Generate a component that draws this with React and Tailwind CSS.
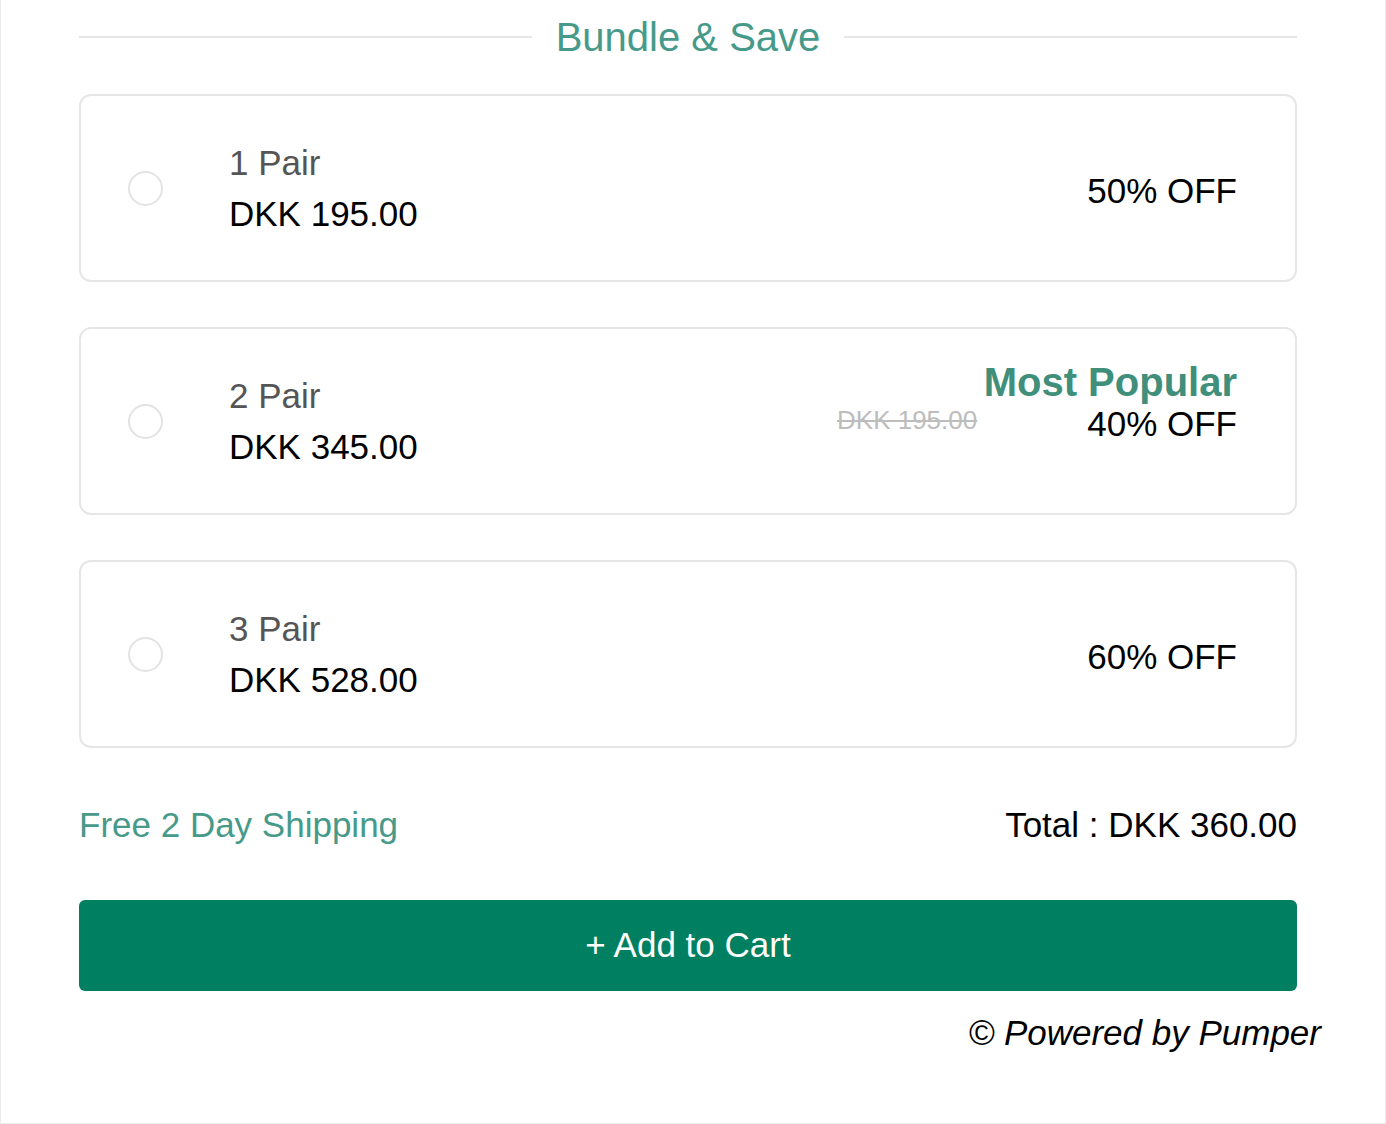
const bundles = [
  { id: 1, label: '1 Pair', price: 'DKK 195.00', off: '50% OFF' },
  { id: 2, label: '2 Pair', price: 'DKK 345.00', off: '40% OFF', compare: 'DKK 195.00', popular: true },
  { id: 3, label: '3 Pair', price: 'DKK 528.00', off: '60% OFF' },
];

function BundleCard({ b }) {
  return (
    <div className="h-[188px] flex items-center border-2 border-[#e6e6e6] rounded-[12px] pl-[47px] pr-[58px]">
      <span className="w-[35px] h-[35px] rounded-full border-2 border-[#e3e3e3] shrink-0" />
      <div className="ml-[66px] -mt-[1px] flex flex-col">
        <span className="text-[35px] leading-[51px] text-[#555555]">{b.label}</span>
        <span className="text-[35px] leading-[51px] text-black">{b.price}</span>
      </div>
      <div className="ml-auto flex items-center">
        {b.compare && (
          <span className="text-[26px] leading-none text-[#bdbdbd] line-through mr-[110px] -mt-[2px]">{b.compare}</span>
        )}
        <div className="relative mt-[7px]">
          {b.popular && (
            <span className="absolute bottom-full right-0 -mb-[4px] whitespace-nowrap text-[40px] leading-none font-bold text-[#3f8f7b]">
              Most Popular
            </span>
          )}
          <span className="block text-[35px] text-black whitespace-nowrap">{b.off}</span>
        </div>
      </div>
    </div>
  );
}

export default function App() {
  return (
    <div className="w-[1386px] h-[1124px] bg-white border-x border-b border-[#ececec] font-['Liberation_Sans',Arial,sans-serif]">
      <div className="ml-[78px] w-[1218px] pt-[14px]">
        <div className="flex items-center gap-[24px]">
          <div className="flex-1 h-[2px] bg-[#e6e6e6]" />
          <h2 className="text-[40px] leading-[46px] text-[#479a89]">Bundle &amp; Save</h2>
          <div className="flex-1 h-[2px] bg-[#e6e6e6]" />
        </div>

        <div className="mt-[34px] flex flex-col gap-[45px]">
          {bundles.map((b) => (
            <BundleCard key={b.id} b={b} />
          ))}
        </div>

        <div className="mt-[57px] flex items-center justify-between text-[35px] leading-[40px]">
          <span className="text-[#479a89]">Free 2 Day Shipping</span>
          <span className="text-black">Total : DKK 360.00</span>
        </div>

        <button className="mt-[55px] w-full h-[91px] rounded-[6px] bg-[#008060] text-white text-[35px]">
          + Add to Cart
        </button>

        <div className="mt-[22px] w-[1242px] flex justify-end">
          <span className="text-[35px] leading-[40px] italic text-black">© Powered by Pumper</span>
        </div>
      </div>
    </div>
  );
}
